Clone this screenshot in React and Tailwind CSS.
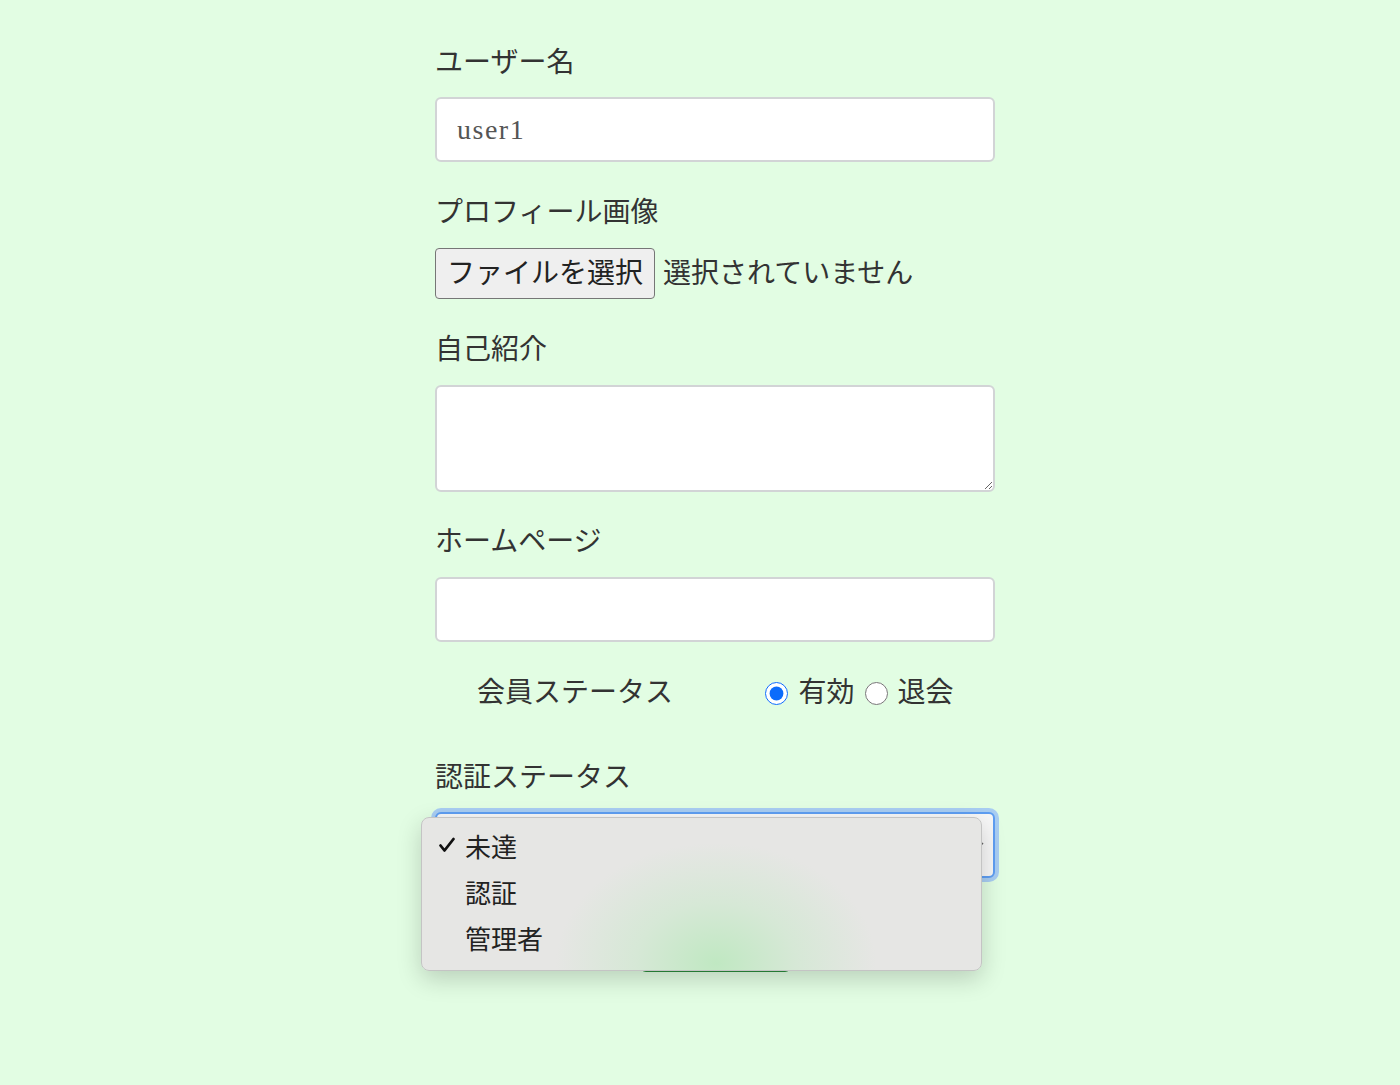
import React, { useState } from 'react';

const labelCls = "h-10 leading-10 text-[28px] text-[#333]";

const App = () => {
    const [name, setName] = useState('user1');
    const [status, setStatus] = useState('active');

    return (
        <div className="min-h-screen bg-[#e2fde3] font-['Liberation_Serif','Noto_Sans_CJK_JP',serif] text-[#333] flex justify-center pl-[30px]">
            <div className="w-[560px] pt-[43px]">
                {/* ユーザー名 */}
                <div className={`${labelCls} mb-[14px]`}>ユーザー名</div>
                <input
                    type="text"
                    value={name}
                    onChange={(e) => setName(e.target.value)}
                    className="block w-full h-[65px] bg-white border-2 border-[#d2d4d6] rounded-md px-5 text-[28px] tracking-[1.5px] text-[#555] outline-none"
                />

                {/* プロフィール画像 */}
                <div className={`${labelCls} mt-[31px] mb-[15px]`}>プロフィール画像</div>
                <div className="flex items-center gap-2 h-[51px]">
                    <button className="h-[51px] px-[11px] bg-[#efefef] border border-[#767676] rounded-[4px] text-[28px] text-[#222]">
                        ファイルを選択
                    </button>
                    <span className="text-[28px] text-[#333]">選択されていません</span>
                </div>

                {/* 自己紹介 */}
                <div className={`${labelCls} mt-[31px] mb-[15px]`}>自己紹介</div>
                <textarea className="block w-full h-[107px] bg-white border-2 border-[#d2d4d6] rounded-md px-5 py-3 text-[24px] outline-none" />

                {/* ホームページ */}
                <div className={`${labelCls} mt-[30px] mb-[15px]`}>ホームページ</div>
                <input
                    type="text"
                    className="block w-full h-[65px] bg-white border-2 border-[#d2d4d6] rounded-md px-5 text-[28px] outline-none"
                />

                {/* 会員ステータス */}
                <div className="grid grid-cols-2 items-center h-10 mt-[30px] text-[28px]">
                    <div className="text-center">会員ステータス</div>
                    <div className="flex items-center justify-center pl-[9px]">
                        <input
                            type="radio"
                            name="status"
                            checked={status === 'active'}
                            onChange={() => setStatus('active')}
                            className="w-[23px] h-[23px] m-0 accent-[#0b6cfb]"
                        />
                        <span className="ml-[10px] mr-[10px]">有効</span>
                        <input
                            type="radio"
                            name="status"
                            checked={status === 'left'}
                            onChange={() => setStatus('left')}
                            className="w-[23px] h-[23px] m-0 accent-[#0b6cfb]"
                        />
                        <span className="ml-[10px]">退会</span>
                    </div>
                </div>

                {/* 認証ステータス */}
                <div className={`${labelCls} mt-[46px] mb-[14px]`}>認証ステータス</div>
                <div className="relative">
                    <div className="h-[66px] w-full bg-[#f7f7f7] border-2 border-[#5e9ef2] rounded-md ring-4 ring-[#a8cdf2] flex items-center justify-end pr-2">
                        <svg width="12" height="12" viewBox="0 0 12 12" className="text-[#666]">
                            <path d="M2 4l4 4 4-4" fill="none" stroke="currentColor" strokeWidth="1.5" />
                        </svg>
                    </div>

                    {/* dropdown menu */}
                    <div className="absolute left-[-14px] top-[5px] w-[561px] h-[154px] z-10 rounded-lg border border-[#c4c4c4] bg-[radial-gradient(ellipse_160px_120px_at_294px_145px,#c0e8c2_0%,#d6e8d6_50%,#e6e6e4_100%)] shadow-[0_8px_24px_rgba(0,0,0,0.18)] pt-[4px] font-['Noto_Sans_CJK_JP',sans-serif] text-[26px] text-[#222]">
                        <div className="h-[46px] flex items-center">
                            <span className="w-[43px] pl-[16px] flex items-center">
                                <svg width="18" height="18" viewBox="0 0 18 18">
                                    <path d="M2.5 9.5l4 5L15.5 3" fill="none" stroke="#111" strokeWidth="2.8" strokeLinecap="round" strokeLinejoin="round" />
                                </svg>
                            </span>
                            <span>未達</span>
                        </div>
                        <div className="h-[46px] flex items-center pl-[43px]">認証</div>
                        <div className="h-[46px] flex items-center pl-[43px]">管理者</div>
                    </div>
                </div>

                {/* submit (behind the menu) */}
                <div className="mt-[38px] mx-auto w-[151px] h-[56px] rounded-md bg-[#2b8c3c]" />
            </div>
        </div>
    );
};

export default App;
